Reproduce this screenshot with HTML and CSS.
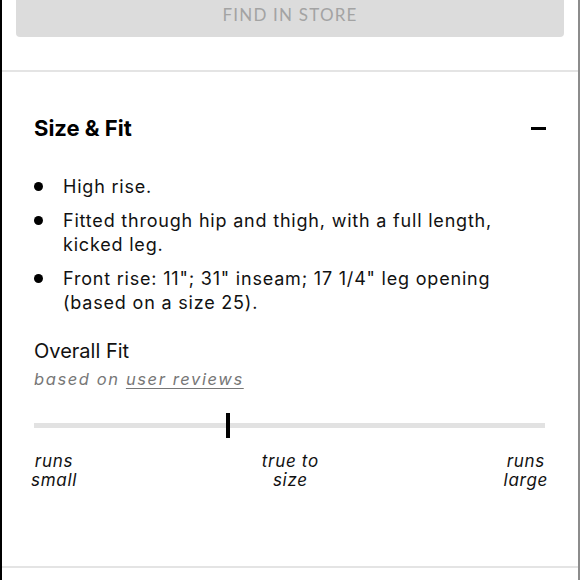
FILE: index.html
```html
<!DOCTYPE html>
<html>
<head>
<meta charset="utf-8">
<link rel="stylesheet" href="styles.css">
</head>
<body>
<div class="page">
  <div class="store">
    <div class="store-btn">FIND IN STORE</div>
  </div>
  <div class="divider"></div>
  <section class="section">
    <div class="sec-head">
      <h2 class="sec-title">Size &amp; Fit</h2>
      <span class="minus"></span>
    </div>
    <ul class="bullets">
      <li class="bullet"><span class="dot"></span><span class="btext">High rise.</span></li>
      <li class="bullet"><span class="dot"></span><span class="btext">Fitted through hip and thigh, with a full length, kicked leg.</span></li>
      <li class="bullet"><span class="dot"></span><span class="btext">Front rise: 11"; 31" inseam; 17 1/4" leg opening (based on a size 25).</span></li>
    </ul>
    <div class="fit-title">Overall Fit</div>
    <div class="fit-sub">based on <span class="link">user reviews</span></div>
    <div class="track"><span class="marker"></span></div>
    <div class="labels">
      <span class="label">runs<br>small</span>
      <span class="label">true to<br>size</span>
      <span class="label">runs<br>large</span>
    </div>
  </section>
  <div class="divider bottom"></div>
</div>
</body>
</html>
```

FILE: styles.css
```css
html, body {
  margin: 0;
  padding: 0;
  background: #fff;
}
body {
  font-family: "Inter", "Lato", sans-serif;
  color: #111;
}
.page {
  width: 580px;
  height: 580px;
  box-sizing: border-box;
  border-left: 2px solid #000;
  border-right: 2px solid #8c8c8c;
  overflow: hidden;
}
.store {
  padding: 0 14px 0 14px;
}
.store-btn {
  margin-top: -10px;
  height: 47px;
  background: #dcdcdc;
  border-radius: 4px;
  color: #a3a3a3;
  font-family: "Lato", sans-serif;
  font-size: 17px;
  letter-spacing: 1.2px;
  display: flex;
  align-items: center;
  justify-content: center;
  padding-top: 2px;
  box-sizing: border-box;
}
.divider {
  margin-top: 33px;
  height: 2px;
  background: #e4e4e4;
}
.section {
  padding: 44px 32px 0 32px;
}
.sec-head {
  display: flex;
  align-items: center;
  justify-content: space-between;
  height: 24px;
}
.sec-title {
  margin: 0;
  font-size: 22px;
  font-weight: 700;
  line-height: 24px;
  color: #000;
}
.minus {
  width: 15px;
  height: 3px;
  background: #000;
}
.bullets {
  list-style: none;
  margin: 35px 0 0 0;
  padding: 0;
  display: flex;
  flex-direction: column;
  gap: 10px;
}
.bullet {
  display: flex;
  align-items: flex-start;
  font-size: 18px;
  line-height: 24px;
  letter-spacing: 0.8px;
}
.dot {
  flex: none;
  width: 9px;
  height: 9px;
  border-radius: 50%;
  background: #000;
  margin: 7px 20px 0 0;
}
.btext {
  flex: 1;
}
.fit-title {
  margin-top: 24px;
  font-size: 20px;
  line-height: 24px;
}
.fit-sub {
  margin-top: 4px;
  font-size: 16.5px;
  line-height: 24px;
  font-style: italic;
  color: #777;
  letter-spacing: 1.6px;
}
.link {
  text-decoration: underline;
  text-underline-offset: 3px;
}
.track {
  position: relative;
  margin-top: 32px;
  height: 5px;
  background: #e2e2e2;
  width: 511px;
}
.marker {
  position: absolute;
  left: 192px;
  top: -10px;
  width: 4px;
  height: 25px;
  background: #000;
}
.labels {
  margin: 24px 0 0 -3px;
  display: flex;
  justify-content: space-between;
  width: 517px;
}
.label {
  font-style: italic;
  font-size: 17px;
  line-height: 19px;
  text-align: center;
  letter-spacing: 0.7px;
}
.divider.bottom {
  margin-top: 76px;
}
```
